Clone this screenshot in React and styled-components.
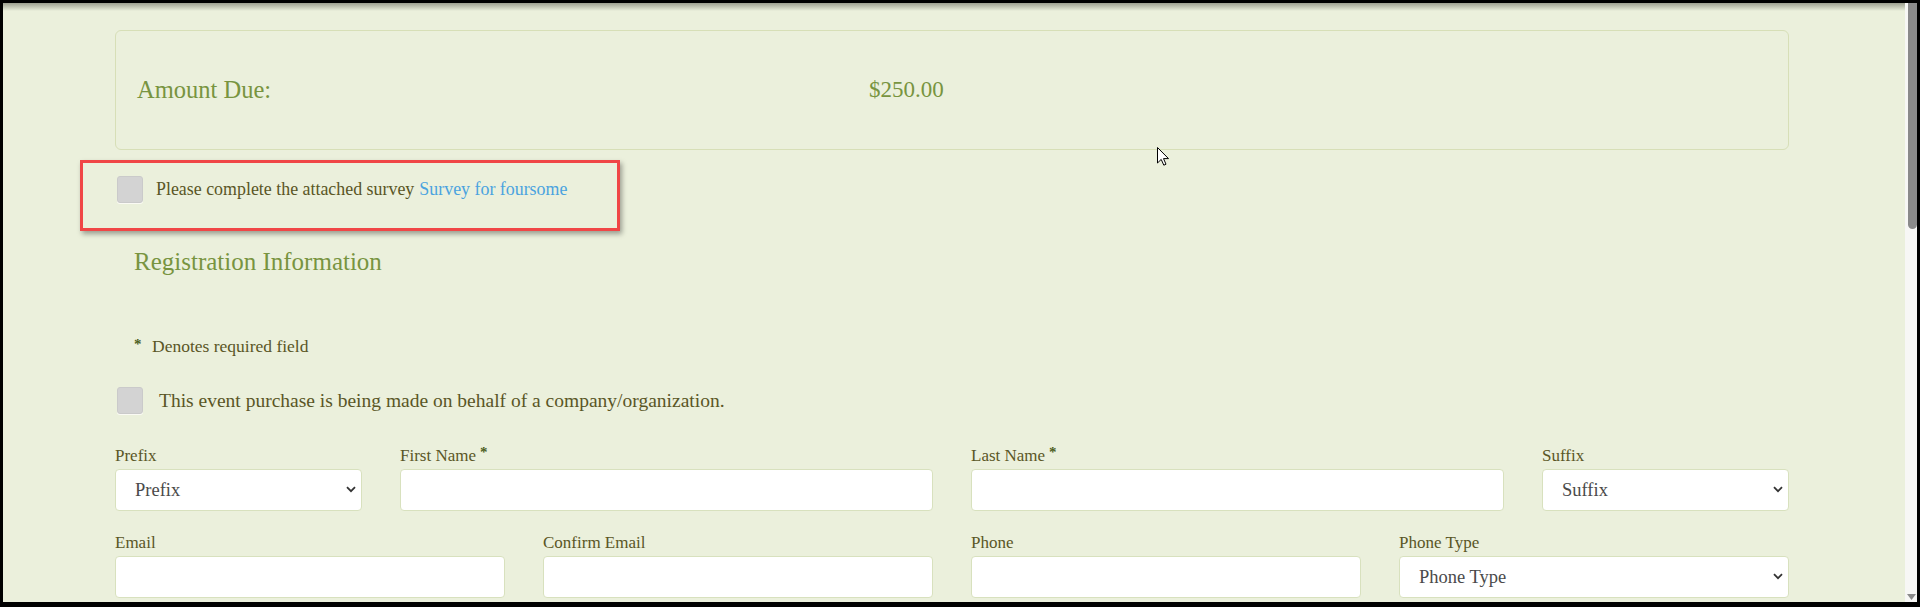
import React from "react";
import styled, { createGlobalStyle } from "styled-components";

const Global = createGlobalStyle`
  html, body { margin: 0; padding: 0; background: #000; }
  body { font-family: "Liberation Serif", "Times New Roman", serif; }
  * { box-sizing: border-box; }
`;

const Frame = styled.div`
  width: 1920px;
  height: 607px;
  background: #000;
  border-style: solid;
  border-color: #000;
  border-width: 3px 3px 5px 3px;
  display: flex;
  overflow: hidden;
`;

const Viewport = styled.div`
  flex: 1;
  position: relative;
  background: #ebf0dc;
  overflow: hidden;
  &::before {
    content: "";
    position: absolute;
    left: 0;
    right: 0;
    top: 0;
    height: 8px;
    background: linear-gradient(to bottom, rgba(60, 60, 50, 0.45), rgba(60, 60, 50, 0));
    pointer-events: none;
  }
`;

const Scrollbar = styled.div`
  width: 12px;
  background: #f7f7f5;
  display: flex;
  flex-direction: column;
  align-items: flex-end;
  justify-content: space-between;
  padding-bottom: 2px;
`;

const Thumb = styled.div`
  width: 9px;
  height: 226px;
  background: #8a8a8a;
  border-radius: 0 0 5px 5px;
`;

const Content = styled.div`
  padding: 27px 0 0 112px;
  width: ${112 + 1674}px;
  color: #5a5626;
`;

const AmountCard = styled.div`
  height: 120px;
  border: 1px solid #d7dfb7;
  border-radius: 6px;
  display: grid;
  grid-template-columns: 732px 1fr;
  align-items: center;
  padding-left: 21px;
  color: #789440;
  padding-top: 0;
`;

const AmountText = styled.span`
  font-size: ${(p) => p.$size}px;
`;

const CheckRow = styled.label`
  display: flex;
  align-items: center;
  gap: ${(p) => p.$gap}px;
  margin-top: ${(p) => p.$mt}px;
  padding-left: 2px;
  font-size: ${(p) => p.$size}px;
  color: #5a5626;
  height: 27px;
`;

const Box = styled.input.attrs({ type: "checkbox" })`
  appearance: none;
  margin: 0;
  width: 26px;
  height: 27px;
  flex: none;
  background: #d3d3d3;
  border: 1px solid #cacaca;
  border-radius: 3px;
  box-shadow: 0 1px 0 #fafaf4;
`;

const Link = styled.a`
  color: #4aa3df;
  text-decoration: none;
  margin-left: 5px;
`;

const SectionTitle = styled.h2`
  margin: 44px 0 0 19px;
  font-weight: normal;
  font-size: 25px;
  line-height: 30px;
  color: #789440;
`;

const RequiredNote = styled.div`
  margin: 57px 0 0 19px;
  font-size: 17.5px;
  line-height: 24px;
  display: flex;
  align-items: baseline;
`;

const NoteStar = styled.span`
  color: #4b5e1c;
  font-weight: bold;
  font-size: 15px;
  width: 18px;
  position: relative;
  top: -3px;
`;

const FieldGrid = styled.div`
  display: grid;
  grid-template-columns: ${(p) => p.$cols};
  column-gap: 38px;
  width: 1674px;
  margin-top: ${(p) => p.$mt}px;
`;

const Field = styled.div`
  display: flex;
  flex-direction: column;
`;

const Label = styled.label`
  font-size: 17px;
  line-height: 20px;
  margin-bottom: 3px;
  color: #5a5626;
`;

const Star = styled.span`
  color: #4b5e1c;
  font-weight: bold;
  font-size: 15px;
  margin-left: 4px;
  position: relative;
  top: -4px;
`;

const TextInput = styled.input`
  height: 42px;
  width: 100%;
  background: #fff;
  border: 1px solid #d8e1be;
  border-radius: 4px;
  font-family: inherit;
  font-size: 18.5px;
`;

const SelectWrap = styled.div`
  position: relative;
  height: 42px;
`;

const Select = styled.select`
  appearance: none;
  width: 100%;
  height: 42px;
  background: #fff;
  border: 1px solid #d8e1be;
  border-radius: 4px;
  padding-left: 19px;
  font-family: "Liberation Serif", "Times New Roman", serif;
  font-size: 18.5px;
  color: #4a4a4a;
`;

const Chevron = styled.svg`
  position: absolute;
  right: 6px;
  top: 17px;
  width: 10px;
  height: 7px;
  pointer-events: none;
`;

const Annotation = styled.div`
  position: absolute;
  left: 77px;
  top: 157px;
  width: 540px;
  height: 71px;
  border: 3px solid #f04646;
  box-shadow: 2px 3px 5px rgba(0, 0, 0, 0.35);
  pointer-events: none;
`;

const Cursor = styled.svg`
  position: absolute;
  left: 1154px;
  top: 144px;
  width: 12px;
  height: 19px;
`;

const DownArrow = styled.svg`
  width: 9px;
  height: 6px;
  margin-right: 1px;
`;

function Dropdown({ placeholder }) {
  return (
    <SelectWrap>
      <Select defaultValue="">
        <option value="">{placeholder}</option>
      </Select>
      <Chevron viewBox="0 0 10 7">
        <path d="M1 1.2 L5 5.2 L9 1.2" fill="none" stroke="#333" strokeWidth="1.8" />
      </Chevron>
    </SelectWrap>
  );
}

function TextField({ label, required }) {
  return (
    <Field>
      <Label>
        {label}
        {required && <Star>*</Star>}
      </Label>
      <TextInput type="text" />
    </Field>
  );
}

function SelectField({ label, placeholder }) {
  return (
    <Field>
      <Label>{label}</Label>
      <Dropdown placeholder={placeholder} />
    </Field>
  );
}

export default function App() {
  return (
    <>
      <Global />
      <Frame>
        <Viewport>
          <Content>
            <AmountCard>
              <AmountText $size={24.5}>Amount Due:</AmountText>
              <AmountText $size={23}>$250.00</AmountText>
            </AmountCard>
            <CheckRow $mt={26} $gap={13} $size={17.9}>
              <Box />
              <span>
                Please complete the attached survey
                <Link href="#">Survey for foursome</Link>
              </span>
            </CheckRow>
            <SectionTitle>Registration Information</SectionTitle>
            <RequiredNote>
              <NoteStar>*</NoteStar>
              <span>Denotes required field</span>
            </RequiredNote>
            <CheckRow $mt={28} $gap={16} $size={19.5}>
              <Box />
              <span>This event purchase is being made on behalf of a company/organization.</span>
            </CheckRow>
            <FieldGrid $cols="247px 1fr 1fr 247px" $mt={32}>
              <SelectField label="Prefix" placeholder="Prefix" />
              <TextField label="First Name" required />
              <TextField label="Last Name" required />
              <SelectField label="Suffix" placeholder="Suffix" />
            </FieldGrid>
            <FieldGrid $cols="repeat(4, 1fr)" $mt={22}>
              <TextField label="Email" />
              <TextField label="Confirm Email" />
              <TextField label="Phone" />
              <SelectField label="Phone Type" placeholder="Phone Type" />
            </FieldGrid>
          </Content>
          <Annotation />
          <Cursor viewBox="0 0 12 19">
            <path d="M0.5 0.5 L0.5 16 L4.2 12.4 L6.8 18.2 L9 17.2 L6.5 11.6 L11.5 11.6 Z" fill="#fff" stroke="#000" strokeWidth="1" strokeLinejoin="round" />
          </Cursor>
        </Viewport>
        <Scrollbar>
          <Thumb />
          <DownArrow viewBox="0 0 9 6">
            <path d="M0 0 L9 0 L4.5 6 Z" fill="#8a8a8a" />
          </DownArrow>
        </Scrollbar>
      </Frame>
    </>
  );
}
